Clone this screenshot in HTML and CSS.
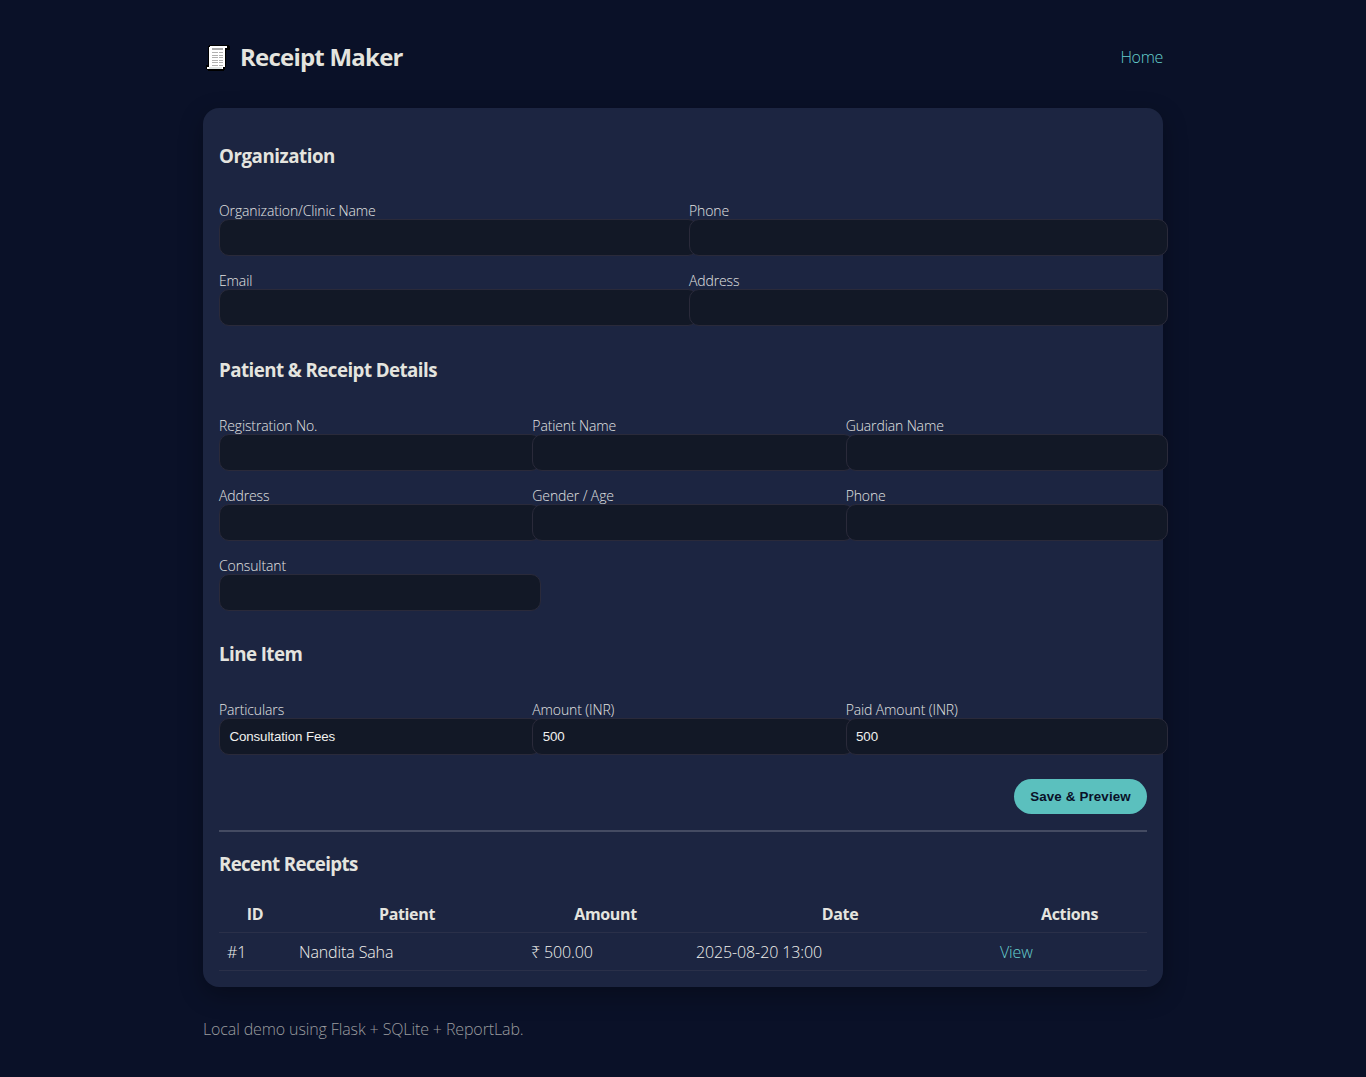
FILE: index.html
```
<!DOCTYPE html>
<html lang="en">
<head>
<meta charset="utf-8">
<title>Receipt Maker</title>
<link rel="stylesheet" href="styles.css">
</head>
<body>
<div class="container">
  <header class="header">
    <h1 class="brand">
      <svg class="logo" width="24" height="28" viewBox="0 0 24 28" shape-rendering="crispEdges" aria-hidden="true">
        <path d="M3 1H22L24 3V6H20V22L18 27H2L0 25V21H2V2Z" fill="#000"/>
        <path d="M4 2H21V4H19V23H17V25H1V23H3V3H4Z" fill="#fff"/>
        <path d="M3 23H16V25H3Z" fill="#e0e4e4"/>
        <path d="M6 4H17V6H6Z" fill="#aaa"/>
        <path d="M6 8.5H12M13 8.5H17M6 11.5H12M13 11.5H17M6 13.5H12M13 13.5H17M6 16.5H12M13 16.5H17M6 18.5H12M13 18.5H17M6 21.5H12M13 21.5H17" stroke="#b0b0b0"/>
      </svg>
      <span>Receipt Maker</span>
    </h1>
    <nav><a class="link home" href="#">Home</a></nav>
  </header>

  <main class="card">
    <form>
      <h3 class="title org">Organization</h3>
      <div class="grid two">
        <label><span>Organization/Clinic Name</span><input type="text"></label>
        <label><span>Phone</span><input type="text"></label>
        <label><span>Email</span><input type="text"></label>
        <label><span>Address</span><input type="text"></label>
      </div>
      <h3 class="title patient">Patient &amp; Receipt Details</h3>
      <div class="grid three">
        <label><span>Registration No.</span><input type="text"></label>
        <label><span>Patient Name</span><input type="text"></label>
        <label><span>Guardian Name</span><input type="text"></label>
        <label><span>Address</span><input type="text"></label>
        <label><span>Gender / Age</span><input type="text"></label>
        <label><span>Phone</span><input type="text"></label>
        <label><span>Consultant</span><input type="text"></label>
      </div>
      <h3 class="title line">Line Item</h3>
      <div class="grid three">
        <label><span>Particulars</span><input type="text" value="Consultation Fees"></label>
        <label><span>Amount (INR)</span><input type="text" value="500"></label>
        <label><span>Paid Amount (INR)</span><input type="text" value="500"></label>
      </div>
      <div class="actions"><button type="button" class="btn">Save &amp; Preview</button></div>
    </form>
    <hr class="rule">
    <h3 class="title recent">Recent Receipts</h3>
    <table class="table">
      <colgroup><col class="c-id"><col class="c-patient"><col class="c-amount"><col class="c-date"><col></colgroup>
      <thead><tr><th>ID</th><th>Patient</th><th>Amount</th><th>Date</th><th>Actions</th></tr></thead>
      <tbody><tr><td>#1</td><td>Nandita Saha</td><td>₹ 500.00</td><td>2025-08-20 13:00</td><td><a class="link" href="#">View</a></td></tr></tbody>
    </table>
  </main>

  <footer class="footer">Local demo using Flask + SQLite + ReportLab.</footer>
</div>
</body>
</html>
```
FILE: styles.css
```
html {
  background: #0a1128;
}

body {
  margin: 0;
  color: #f2f2ee;
  font: 350 16px/21px "Open Sans", "Noto Sans", sans-serif;
  letter-spacing: -0.12px;
}

.container {
  width: 960px;
  margin: 0 auto;
  padding-top: 24px;
}

.header {
  display: flex;
  align-items: center;
  justify-content: space-between;
  height: 66px;
  margin-bottom: 18px;
}

.brand {
  display: flex;
  align-items: center;
  gap: 10px;
  margin: 0;
  padding-left: 3px;
  color: #e4e4df;
  font-size: 24px;
  font-weight: 700;
  line-height: 32px;
  letter-spacing: -0.78px;
}

.logo {
  margin-top: 2px;
}

.link {
  color: #66d0ce;
  text-decoration: none;
}

.home {
  letter-spacing: -0.3px;
}

.card {
  box-sizing: border-box;
  height: 879px;
  padding: 16px;
  border-radius: 16px;
  background: #1c2541;
  box-shadow: 0 8px 24px rgba(0, 0, 0, 0.3);
}

.title {
  margin: 0;
  color: #e4e4df;
  font-size: 18.72px;
  font-weight: 700;
  line-height: 25px;
  letter-spacing: -0.55px;
}

.org { padding: 19px 0 33px; letter-spacing: -0.45px; }
.patient { padding: 31px 0 34px; }
.line { padding: 30px 0 34px; }

.grid {
  display: grid;
  column-gap: 12px;
  row-gap: 15px;
}

.two { grid-template-columns: repeat(2, 1fr); }
.three { grid-template-columns: repeat(3, 1fr); }

.grid label {
  display: block;
  min-width: 0;
  font-size: 14px;
  line-height: 16px;
  color: #e2e3e1;
}

.grid span {
  display: block;
  padding-top: 2px;
}

.grid input {
  display: block;
  width: 100%;
  height: 15px;
  padding: 10px 9.4px;
  border: 1px solid #2a2a3a;
  border-radius: 10px;
  background: #121826;
  color: #f0f0ee;
  font: 13.33px/15px "Liberation Sans", Arial, sans-serif;
  letter-spacing: -0.1px;
}

.actions {
  display: flex;
  justify-content: flex-end;
  padding-top: 24px;
}

.btn {
  width: 133px;
  height: 35px;
  padding: 0;
  border: 0;
  border-radius: 18px;
  background: #5bc0be;
  color: #0a1128;
  font: 700 13.33px/15px "Liberation Sans", Arial, sans-serif;
  letter-spacing: 0.15px;
}

.rule {
  height: 2px;
  margin: 16px 0 19px;
  border: 0;
  background: #444b62;
}

.recent { padding-bottom: 19px; letter-spacing: -0.65px; }

.table {
  width: 100%;
  table-layout: fixed;
  border-collapse: collapse;
}

.c-id { width: 72px; }
.c-patient { width: 232px; }
.c-amount { width: 165px; }
.c-date { width: 304px; }

.table th,
.table td {
  height: 21px;
  padding: 9px 8px 7px;
  border-bottom: 1px solid #2a3049;
  text-align: left;
}

.table th {
  color: #e4e4df;
  font-weight: 700;
  text-align: center;
  letter-spacing: -0.35px;
}

.footer {
  margin-top: 32px;
  color: #9a9c9f;
}
```
